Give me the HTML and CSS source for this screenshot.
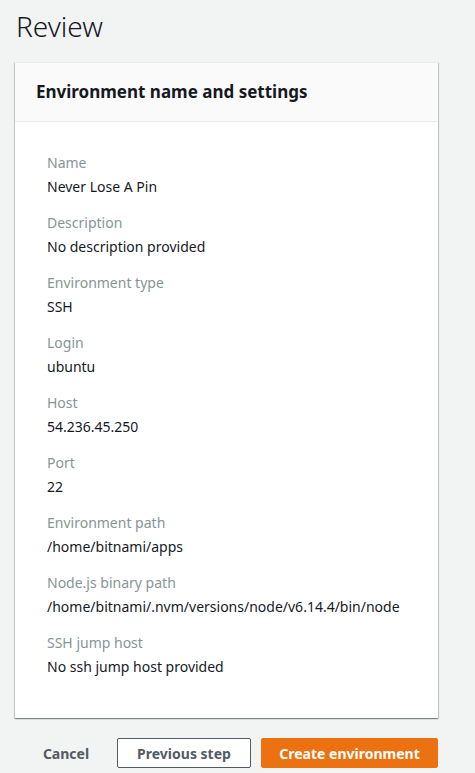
FILE: index.html
```html
<!DOCTYPE html>
<html lang="en">
<head>
<meta charset="utf-8">
<title>Review</title>
<link rel="stylesheet" href="styles.css">
</head>
<body>
<div class="page">
  <h1 class="title">Review</h1>
  <section class="card">
    <header class="card-header">
      <h2>Environment name and settings</h2>
    </header>
    <div class="card-body">
      <div class="field"><div class="label">Name</div><div class="value">Never Lose A Pin</div></div>
      <div class="field"><div class="label">Description</div><div class="value">No description provided</div></div>
      <div class="field"><div class="label">Environment type</div><div class="value">SSH</div></div>
      <div class="field"><div class="label">Login</div><div class="value">ubuntu</div></div>
      <div class="field"><div class="label">Host</div><div class="value">54.236.45.250</div></div>
      <div class="field"><div class="label">Port</div><div class="value">22</div></div>
      <div class="field"><div class="label">Environment path</div><div class="value">/home/bitnami/apps</div></div>
      <div class="field"><div class="label">Node.js binary path</div><div class="value">/home/bitnami/.nvm/versions/node/v6.14.4/bin/node</div></div>
      <div class="field"><div class="label">SSH jump host</div><div class="value">No ssh jump host provided</div></div>
    </div>
  </section>
  <div class="actions">
    <button class="btn btn-link">Cancel</button>
    <button class="btn btn-normal">Previous step</button>
    <button class="btn btn-primary">Create environment</button>
  </div>
</div>
</body>
</html>
```

FILE: styles.css
```css
* { box-sizing: border-box; }
html, body {
  margin: 0;
  background: #f2f3f3;
  font-family: "Noto Sans", "Open Sans", sans-serif;
  color: #16191f;
}
.page {
  padding: 7px 37px 0 15px;
}
.title {
  margin: 0 0 17px 1px;
  font-size: 28px;
  font-weight: 300;
  line-height: 38px;
  color: #16191f;
}
.card {
  background: #fff;
  box-shadow: 0 1px 1px 0 rgba(0,28,36,.3), 1px 1px 1px 0 rgba(0,28,36,.15), -1px 1px 1px 0 rgba(0,28,36,.15);
  border-top: 1px solid #eaeded;
}
.card-header {
  background: #fafafa;
  border-bottom: 1px solid #eaeded;
  padding: 0 21px;
  height: 59px;
  display: flex;
  align-items: center;
}
.card-header h2 {
  margin: 0;
  font-size: 17px;
  font-weight: 700;
  line-height: 22px;
}
.card-body {
  padding: 30px 32px 40px;
  display: flex;
  flex-direction: column;
  gap: 14px;
}
.label {
  font-size: 14px;
  line-height: 22px;
  color: #879596;
}
.value {
  margin-top: 2px;
  font-size: 14px;
  line-height: 22px;
  color: #16191f;
}
.actions {
  margin-top: 20px;
  display: flex;
  align-items: center;
  justify-content: flex-end;
  gap: 10px;
}
.btn {
  font-family: inherit;
  font-size: 14px;
  font-weight: 700;
  height: 30px;
  padding: 0;
  border-radius: 2px;
  white-space: nowrap;
  cursor: pointer;
}
.btn-link {
  background: none;
  border: 1px solid transparent;
  color: #545b64;
  width: 60px;
  margin-right: 11px;
}
.btn-normal {
  background: #fff;
  border: 1px solid #545b64;
  color: #545b64;
  width: 134px;
}
.btn-primary {
  background: #ec7211;
  border: 1px solid #ec7211;
  color: #fff;
  width: 177px;
}
```
